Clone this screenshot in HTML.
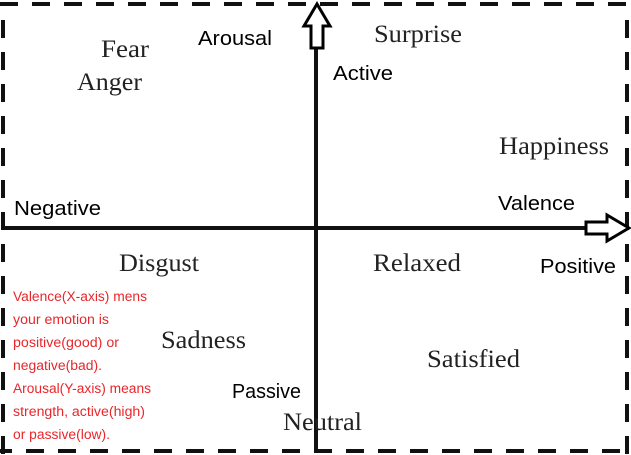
<!DOCTYPE html>
<html><head><meta charset="utf-8"><style>
html,body{margin:0;padding:0;background:#fff;width:631px;height:455px;overflow:hidden}
svg{display:block}
.s{font-family:"Liberation Sans",sans-serif;font-size:20px;fill:#000}
.r{font-family:"Liberation Serif",serif;font-size:25px;fill:#222}
.t{font-family:"Liberation Sans",sans-serif;font-size:13.5px;fill:#e8262b}
</style></head><body>
<svg width="631" height="455" viewBox="0 0 631 455">
<g stroke="#111" stroke-width="4" fill="none" stroke-dasharray="18 14">
<line x1="0" y1="4" x2="631" y2="4"/>
<line x1="3" y1="20" x2="3" y2="455"/>
<line x1="0" y1="451" x2="631" y2="451" stroke-dashoffset="6"/>
<line x1="627" y1="20" x2="627" y2="455"/>
</g>
<rect x="314" y="48" width="4" height="404" fill="#111"/>
<rect x="4" y="226" width="582" height="4" fill="#111"/>
<path d="M317 4 L330 26 L323 26 L323 48 L311 48 L311 26 L304 26 Z" fill="#fff" stroke="#000" stroke-width="3"/>
<path d="M629 228 L607 215 L607 222 L586 222 L586 234 L607 234 L607 241 Z" fill="#fff" stroke="#000" stroke-width="3"/>
<text class="r" x="101" y="57" textLength="48" lengthAdjust="spacingAndGlyphs">Fear</text>
<text class="r" x="77" y="90" textLength="65" lengthAdjust="spacingAndGlyphs">Anger</text>
<text class="s" x="198" y="45" textLength="74" lengthAdjust="spacingAndGlyphs">Arousal</text>
<text class="r" x="374" y="42" textLength="88" lengthAdjust="spacingAndGlyphs">Surprise</text>
<text class="s" x="333" y="80" textLength="60" lengthAdjust="spacingAndGlyphs">Active</text>
<text class="r" x="499" y="154" textLength="110" lengthAdjust="spacingAndGlyphs">Happiness</text>
<text class="s" x="14" y="215" textLength="87" lengthAdjust="spacingAndGlyphs">Negative</text>
<text class="s" x="498" y="210" textLength="77" lengthAdjust="spacingAndGlyphs">Valence</text>
<text class="r" x="119" y="271" textLength="80" lengthAdjust="spacingAndGlyphs">Disgust</text>
<text class="r" x="373" y="271" textLength="88" lengthAdjust="spacingAndGlyphs">Relaxed</text>
<text class="s" x="540" y="273" textLength="76" lengthAdjust="spacingAndGlyphs">Positive</text>
<text class="r" x="161" y="348" textLength="85" lengthAdjust="spacingAndGlyphs">Sadness</text>
<text class="r" x="427" y="367" textLength="93" lengthAdjust="spacingAndGlyphs">Satisfied</text>
<text class="s" x="232" y="398" textLength="69" lengthAdjust="spacingAndGlyphs">Passive</text>
<text class="r" x="283" y="430" textLength="79" lengthAdjust="spacingAndGlyphs">Neutral</text>
<text class="t" x="13" y="301" textLength="134" lengthAdjust="spacingAndGlyphs">Valence(X-axis) mens</text>
<text class="t" x="13" y="324" textLength="96" lengthAdjust="spacingAndGlyphs">your emotion is</text>
<text class="t" x="13" y="347" textLength="106" lengthAdjust="spacingAndGlyphs">positive(good) or</text>
<text class="t" x="13" y="370" textLength="89" lengthAdjust="spacingAndGlyphs">negative(bad).</text>
<text class="t" x="13" y="393" textLength="138" lengthAdjust="spacingAndGlyphs">Arousal(Y-axis) means</text>
<text class="t" x="13" y="416" textLength="132" lengthAdjust="spacingAndGlyphs">strength, active(high)</text>
<text class="t" x="13" y="439" textLength="97" lengthAdjust="spacingAndGlyphs">or passive(low).</text>
</svg>
</body></html>
